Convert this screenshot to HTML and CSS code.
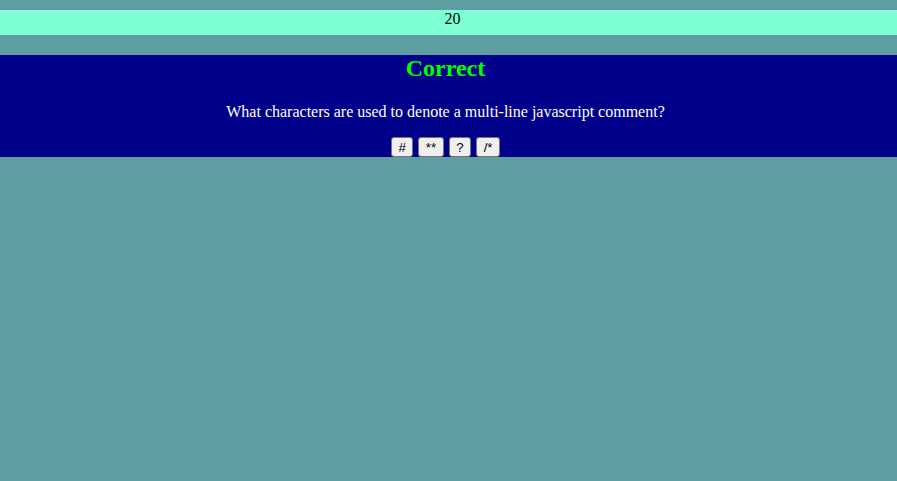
FILE: index.html
```html
<!DOCTYPE html>
<html>
<head>
<meta charset="utf-8">
<link rel="stylesheet" href="styles.css">
</head>
<body>
<div class="timer">20</div>
<div class="quiz">
  <h2 class="result">Correct</h2>
  <p class="question">What characters are used to denote a multi-line javascript comment?</p>
  <div class="choices">
    <button class="choice">#</button>
    <button class="choice">**</button>
    <button class="choice">?</button>
    <button class="choice">/*</button>
  </div>
</div>
</body>
</html>
```
FILE: styles.css
```css
html, body {
  margin: 0;
  background: #5f9ea0;
  font-family: "Liberation Serif", "Times New Roman", serif;
  font-size: 16px;
}
body {
  padding-top: 10px;
}
.timer {
  background: #7fffd4;
  text-align: center;
  height: 25px;
  line-height: 18px;
  padding-left: 8px;
  color: #000;
}
.quiz {
  margin-top: 20px;
  background: #00008b;
  text-align: center;
  padding-right: 6px;
}
.result {
  margin: 0;
  color: #00ff00;
  font-size: 24px;
  font-weight: bold;
}
.question {
  color: #fff;
  margin: 21px 0 16px;
}
.choices {
  display: flex;
  justify-content: center;
  gap: 5px;
}
.choice {
  font-family: "Liberation Sans", Arial, sans-serif;
  font-size: 13.333px;
  height: 20px;
  padding: 1px 6.5px;
  margin: 0;
  background: #efefef;
  border: 1px solid #767676;
  border-radius: 3px;
  color: #000;
}
```
